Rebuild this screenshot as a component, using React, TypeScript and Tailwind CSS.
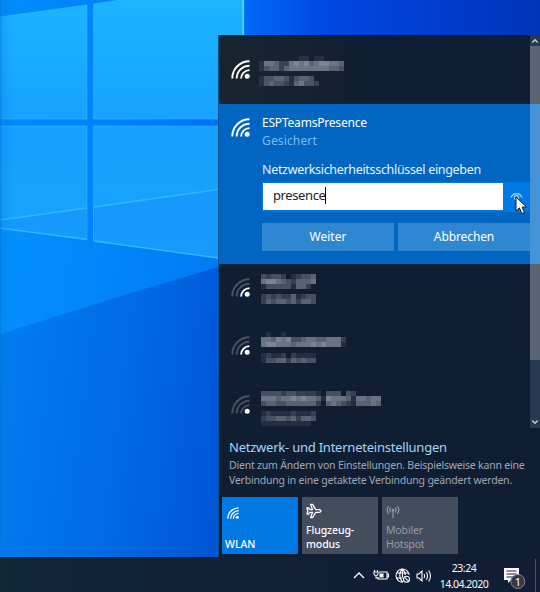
import React from "react";

const FONT = "font-['Noto_Sans','Open_Sans',sans-serif]";

function Wallpaper() {
  return (
    <svg className="absolute inset-0" width="540" height="557" viewBox="0 0 540 557">
      <defs>
        <linearGradient id="sky" gradientUnits="userSpaceOnUse" x1="0" y1="0" x2="540" y2="0">
          <stop offset="0" stopColor="#008cfa" />
          <stop offset="0.2" stopColor="#0082fa" />
          <stop offset="0.44" stopColor="#006cfc" />
          <stop offset="0.6" stopColor="#0048e4" />
          <stop offset="1" stopColor="#0034b8" />
        </linearGradient>
        <linearGradient id="floor" gradientUnits="userSpaceOnUse" x1="0" y1="430" x2="225" y2="460">
          <stop offset="0" stopColor="#007cee" />
          <stop offset="0.5" stopColor="#006be4" />
          <stop offset="1" stopColor="#0055d4" />
        </linearGradient>
        <linearGradient id="beam" gradientUnits="userSpaceOnUse" x1="0" y1="240" x2="218" y2="280">
          <stop offset="0" stopColor="#0490fc" />
          <stop offset="1" stopColor="#007af4" />
        </linearGradient>
        <linearGradient id="pane" gradientUnits="userSpaceOnUse" x1="0" y1="0" x2="0" y2="260">
          <stop offset="0" stopColor="#1ab5ff" />
          <stop offset="0.45" stopColor="#18a2ff" />
          <stop offset="0.5" stopColor="#16a0ff" />
          <stop offset="1" stopColor="#1aa4ff" />
        </linearGradient>
        <linearGradient id="edge" gradientUnits="userSpaceOnUse" x1="0" y1="0" x2="14" y2="0">
          <stop offset="0" stopColor="#0068c8" stopOpacity="0.5" />
          <stop offset="0.2" stopColor="#0080e0" stopOpacity="0.25" />
          <stop offset="1" stopColor="#0080e0" stopOpacity="0" />
        </linearGradient>
      </defs>
      <rect width="540" height="557" fill="url(#sky)" />
      <path d="M0 228L218 258V557H0Z" fill="url(#beam)" />
      <path d="M0 334L118 297L218 267V557H0Z" fill="url(#floor)" />
      <g fill="url(#pane)" stroke="#3cc4ff" strokeOpacity="0.45" strokeWidth="1">
        <path d="M-1 17L87 5V119H-1Z" />
        <path d="M93.500 4L122 -0.500H243V119H93.500Z" />
        <path d="M-1 126H87V239.500L-1 228Z" />
        <path d="M93.500 126H243V261L93.500 241Z" />
      </g>
      <path d="M0 220L87 208V239L0 228ZM94 207L243 185.500V261L94 240.500Z" fill="#1694fc" fillOpacity="0.65" />
      <path d="M0 220L87 208M94 207L218 189.500" stroke="#2eb8ff" strokeWidth="1.300" />
      <path d="M0 228L87 239.500M94 241L218 258" stroke="#2eb8ff" strokeWidth="1.300" />
      <path d="M243.300 0V36" stroke="#50e0ff" strokeWidth="1.600" />
      <rect width="14" height="540" fill="url(#edge)" />
    </svg>
  );
}

/* Signal strength: dot plus three arcs, the lit ones counted from the inside. */
function Wifi({ lit, size = 19 }: { lit: number; size?: number }) {
  const dim = "#48535f";
  return (
    <svg width={size} height={size} viewBox="0 0 19 19" fill="none" strokeWidth="1.900" className="shrink-0">
      <path d="M1.300 18.500A17 17 0 0 1 18.500 1.300" stroke={lit > 2 ? "#fff" : dim} />
      <path d="M5.700 18.500A12.800 12.800 0 0 1 18.500 5.700" stroke={lit > 1 ? "#fff" : dim} />
      <path d="M10.100 18.500A8.400 8.400 0 0 1 18.500 10.100" stroke={lit > 0 ? "#fff" : dim} />
      <circle cx="16.200" cy="16.200" r="2.500" fill="#fff" />
    </svg>
  );
}

/* Pixelated label; each digit is the brightness of one cell. */
function Mosaic({ rows }: { rows: string[] }) {
  return (
    <div className="flex flex-col">
      {rows.map((r, i) => (
        <div key={i} className="flex h-[5px]">
          {r.split("").map((c, j) => (
            <div key={j} className="w-[5px] bg-[#c4c8d4]" style={{ opacity: Number(c) / 10 }} />
          ))}
        </div>
      ))}
    </div>
  );
}

function Network({ lit, name, sub, gap }: { lit: number; name: string[]; sub: string[]; gap: string }) {
  return (
    <div className="flex h-[58.300px] items-start gap-[11px] pl-[12px]">
      <div className="pt-[14px]"><Wifi lit={lit} /></div>
      <div className={`flex flex-col pt-[10px] ${gap}`}>
        <Mosaic rows={name} />
        <Mosaic rows={sub} />
      </div>
    </div>
  );
}

function Pointer() {
  return (
    <svg className="absolute left-[12px] top-[13px]" width="13" height="19" viewBox="0 0 13 19">
      <path d="M1 1V15L4.400 11.900L6.800 17.500L9.400 16.400L7.100 11H11.500Z" fill="#fff" stroke="#101828" strokeWidth="1" />
    </svg>
  );
}

function Flyout() {
  return (
    <div className="ml-[218px] mt-[35px] flex h-[522px] w-[322px] flex-col border-l border-[#08518f] bg-[#101e33]">
      <div className="flex h-[393px] shrink-0">
        <div className="w-[311px]">
          <div className="flex h-[69px] items-start gap-[9px] bg-linear-to-r from-[#182530] to-[#101e33] to-50% pl-[12px]">
            <div className="pt-[25px]"><Wifi lit={3} /></div>
            <div className="flex flex-col gap-[5px] pt-[21px]">
              <Mosaic rows={["00000000110110000", "15542256564566554", "13442455555555443"]} />
              <Mosaic rows={["133443134430", "134332145332"]} />
            </div>
          </div>
          <div className="flex h-[160px] items-start bg-[#0066c2] pl-[12px]">
            <div className="pt-[14px]"><Wifi lit={3} /></div>
            <div className="ml-[12px] w-[268px]">
              <div className="mt-[10px] whitespace-nowrap text-[12px] leading-[18px] tracking-[-0.200px] text-white">ESPTeamsPresence</div>
              <div className="text-[12px] leading-[18px] tracking-[0.150px] text-[#80bbec]">Gesichert</div>
              <div className="mt-[11px] whitespace-nowrap text-[12.500px] leading-[18px] tracking-[-0.320px] text-[#e4f3ff]">Netzwerksicherheitsschlüssel eingeben</div>
              <div className="mt-[3px] flex h-[30px] bg-[#0078e4] p-px pr-0">
                <div className="flex h-[27px] w-[240px] items-center bg-white pb-[2px] pl-[10px] text-[13px] tracking-[-0.400px] text-[#222]">
                  presence<span className="h-[17px] w-px bg-black" />
                </div>
                <div className="relative w-[26px]">
                  <svg className="absolute left-[7px] top-[9px]" width="13" height="9" viewBox="0 0 13 9" fill="none" stroke="#9cd4ff" strokeWidth="1.300">
                    <path d="M1 5.500C3 .2 10 .2 12 5.500" />
                    <circle cx="6.500" cy="5.500" r="2" />
                  </svg>
                  <Pointer />
                </div>
              </div>
              <div className="mt-[11px] flex gap-[4px] text-[12px] leading-[28px] text-white">
                <div className="h-[28px] w-[132px] bg-[#2f87d1] text-center">Weiter</div>
                <div className="h-[28px] w-[132px] bg-[#2f87d1] text-center tracking-[-0.100px]">Abbrechen</div>
              </div>
            </div>
          </div>
          <Network lit={1} gap="gap-[5px]" name={["32332012334", "56654324445", "13333314420"]} sub={["23232241233", "24344342443"]} />
          <Network lit={1} gap="gap-[6px]" name={["01001000000000000", "55465633455445552", "56655545556565551"]} sub={["12112021111", "13344243433"]} />
          <div className="flex h-[46px] items-start gap-[11px] pl-[12px]">
            <div className="pt-[14px]"><Wifi lit={0} /></div>
            <div className="flex flex-col gap-[5px] pt-[10px]">
              <Mosaic rows={["333323322221033303200000", "555455656554165554155455", "344334444442045432144454"]} />
              <Mosaic rows={["12111121112", "23344342443", "11111111110"]} />
            </div>
          </div>
        </div>
        <div className="flex w-[10px] flex-col bg-[#283850]">
          <div className="flex h-[11px] items-center justify-center">
            <svg width="8" height="6" viewBox="0 0 8 6" fill="none" stroke="#c4ccd8" strokeWidth="1.400"><path d="M1.300 4.500L4 1.700L6.700 4.500" /></svg>
          </div>
          <div className="h-[58px] bg-[#596477]" />
          <div className="h-[160px] bg-[#4593d6]" />
          <div className="h-[96px] bg-[#596477]" />
          <div className="flex grow items-end justify-center pb-[3px]">
            <svg width="8" height="6" viewBox="0 0 8 6" fill="none" stroke="#c4ccd8" strokeWidth="1.400"><path d="M1.300 1.500L4 4.300L6.700 1.500" /></svg>
          </div>
        </div>
      </div>
      <div className="whitespace-nowrap pl-[10px] pt-[10px]">
        <div className="text-[13px] leading-[18px] tracking-[-0.230px] text-[#a6d3fb]">Netzwerk- und Interneteinstellungen</div>
        <div className="mt-[2px] text-[10.500px] leading-[14.500px] tracking-[-0.210px] text-[#a0a7b3]">
          <div>Dient zum Ändern von Einstellungen. Beispielsweise kann eine</div>
          <div>Verbindung in eine getaktete Verbindung geändert werden.</div>
        </div>
      </div>
      <div className="mt-[10px] flex gap-[4px] pl-[3px] text-[10.500px] leading-[14px] text-white">
        <div className="flex h-[57px] w-[76px] flex-col justify-between bg-[#0078e4] px-[4px] pb-[3px] pt-[10px]">
          <div className="pl-[1px]"><Wifi lit={3} size={12} /></div>
          <div className="-ml-px font-medium">WLAN</div>
        </div>
        <div className="flex h-[57px] w-[76px] flex-col justify-between bg-[#434d5d] px-[4px] pb-[3px] pt-[6px]">
          <svg width="16" height="16" viewBox="0 0 16 16" fill="none" stroke="#fff" strokeWidth="1.300" strokeLinejoin="round">
            <path d="M1 5H2.600L4 6.700H6.500L4.600 1.300H6.500L9.800 6.700H13.200Q15 7 15 8Q15 9 13.200 9.300H9.800L6.500 14.700H4.600L6.500 9.300H4L2.600 11H1L1.800 8Z" />
          </svg>
          <div className="font-medium tracking-[-0.100px]">Flugzeug-<br />modus</div>
        </div>
        <div className="flex h-[57px] w-[76px] flex-col justify-between bg-[#434d5d] px-[4px] pb-[3px] pt-[8px] text-[#959ca8]">
          <svg width="14" height="14" viewBox="0 0 14 14" fill="none" stroke="#a4abb5" strokeWidth="1">
            <path d="M2.500 1Q-.5 5 2.500 9M4.700 2.500Q2.800 5 4.700 7.500M11.500 1Q14.500 5 11.500 9M9.300 2.500Q11.200 5 9.300 7.500M7 5V13" />
            <circle cx="7" cy="5" r=".8" fill="#a4abb5" />
          </svg>
          <div className="tracking-[-0.150px]">Mobiler<br />Hotspot</div>
        </div>
      </div>
    </div>
  );
}

function Taskbar() {
  return (
    <div className="flex h-[35px] items-start bg-linear-to-r from-[#112838] via-[#102138] via-30% to-[#101d34] text-white">
      <svg className="ml-[353px] mt-[14px]" width="12" height="9" viewBox="0 0 12 9" fill="none" stroke="#fff" strokeWidth="1.300"><path d="M1 7L6 2L11 7" /></svg>
      <svg className="ml-[8px] mt-[12px]" width="17" height="13" viewBox="0 0 17 13" fill="none" stroke="#fff" strokeWidth="1.100">
        <path d="M6 3H14V10H5V8M14 5H15.500V8H14M1.500 1V3M4.500 1V3M1 3H5V5Q5 6.500 3 6.500Q1 6.500 1 5ZM3 6.500V9H5" />
        <path d="M7 5H10V8H7Z" fill="#fff" />
      </svg>
      <svg className="ml-[5px] mt-[11px]" width="16" height="16" viewBox="0 0 16 16" fill="none" stroke="#fff" strokeWidth="1.100">
        <path d="M8 14.200A6.600 6.600 0 1 1 14.200 7M1.800 5H13.600M1.800 10H8M8 14.200C3.800 11 3.800 4 7.500 1C9.500 3 10.300 5 10.300 7M7.500 1V9" />
        <circle cx="11.500" cy="11.300" r="3" />
        <path d="M9.400 9.200L13.600 13.400" />
      </svg>
      <svg className="ml-[5px] mt-[12px]" width="16" height="14" viewBox="0 0 16 14" fill="none" stroke="#fff" strokeWidth="1.100">
        <path d="M1 5H3L6 2V12L3 9H1ZM8 5Q9.300 7 8 9M10.300 3.300Q12.800 7 10.300 10.700M12.600 1.500Q16.400 7 12.600 12.500" />
      </svg>
      <div className="ml-[6px] mt-[3px] w-[52px] whitespace-nowrap text-center text-[10.500px] leading-[16px] tracking-[-0.500px]">
        <div>23:24</div>
        <div>14.04.2020</div>
      </div>
      <svg className="ml-[13px] mt-[10px]" width="24" height="24" viewBox="0 0 24 24">
        <path d="M1 1H16V13H8L5 16V13H1Z" fill="#fff" />
        <path d="M3.500 4H13.500M3.500 7H13.500M3.500 10H10" stroke="#101d34" strokeWidth="1" />
        <circle cx="14.800" cy="14.500" r="7" fill="#343a45" stroke="#8a9099" strokeWidth=".9" />
        <text x="14.800" y="18.500" fontSize="11" fill="#fff" textAnchor="middle">1</text>
      </svg>
      <div className="ml-[8px] mt-[2px] h-[33px] w-px bg-[#465164]" />
    </div>
  );
}

export default function App() {
  return (
    <div className={`relative h-[592px] w-[540px] overflow-hidden bg-[#101e33] ${FONT}`}>
      <Wallpaper />
      <div className="relative flex flex-col">
        <Flyout />
        <Taskbar />
      </div>
    </div>
  );
}
